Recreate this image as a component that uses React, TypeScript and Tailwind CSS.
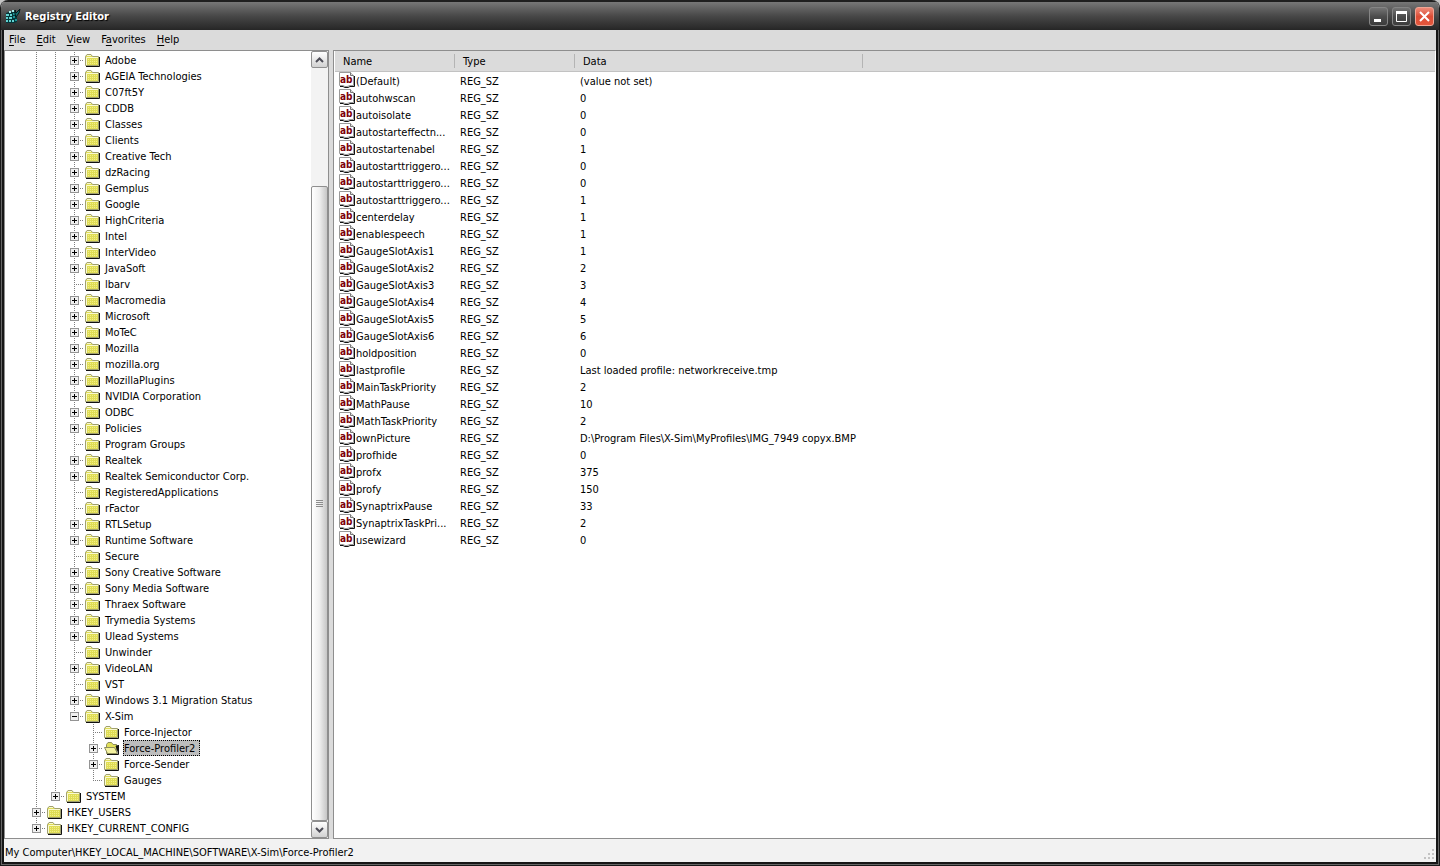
import { useState } from "react";

type Kind = "line" | "blank" | "plus" | "minus" | "leaf" | "lastplus" | "lastleaf" | "lastminus";

interface Node {
  name: string;
  cells: Kind[];
  open?: boolean;
}

const leafNames = new Set([
  "lbarv", "Program Groups", "RegisteredApplications", "rFactor", "Secure", "Unwinder", "VST",
]);

const software = [
  "Adobe", "AGEIA Technologies", "C07ft5Y", "CDDB", "Classes", "Clients", "Creative Tech", "dzRacing",
  "Gemplus", "Google", "HighCriteria", "Intel", "InterVideo", "JavaSoft", "lbarv", "Macromedia",
  "Microsoft", "MoTeC", "Mozilla", "mozilla.org", "MozillaPlugins", "NVIDIA Corporation", "ODBC",
  "Policies", "Program Groups", "Realtek", "Realtek Semiconductor Corp.", "RegisteredApplications",
  "rFactor", "RTLSetup", "Runtime Software", "Secure", "Sony Creative Software", "Sony Media Software",
  "Thraex Software", "Trymedia Systems", "Ulead Systems", "Unwinder", "VideoLAN", "VST",
  "Windows 3.1 Migration Status",
];

const nodes: Node[] = [
  ...software.map((name): Node => ({ name, cells: ["line", "line", leafNames.has(name) ? "leaf" : "plus"] })),
  { name: "X-Sim", cells: ["line", "line", "lastminus"] },
  { name: "Force-Injector", cells: ["line", "line", "blank", "leaf"] },
  { name: "Force-Profiler2", cells: ["line", "line", "blank", "plus"], open: true },
  { name: "Force-Sender", cells: ["line", "line", "blank", "plus"] },
  { name: "Gauges", cells: ["line", "line", "blank", "lastleaf"] },
  { name: "SYSTEM", cells: ["line", "lastplus"] },
  { name: "HKEY_USERS", cells: ["plus"] },
  { name: "HKEY_CURRENT_CONFIG", cells: ["lastplus"] },
];

const values: [string, string][] = [
  ["(Default)", "(value not set)"],
  ["autohwscan", "0"],
  ["autoisolate", "0"],
  ["autostarteffectn...", "0"],
  ["autostartenabel", "1"],
  ["autostarttriggero...", "0"],
  ["autostarttriggero...", "0"],
  ["autostarttriggero...", "1"],
  ["centerdelay", "1"],
  ["enablespeech", "1"],
  ["GaugeSlotAxis1", "1"],
  ["GaugeSlotAxis2", "2"],
  ["GaugeSlotAxis3", "3"],
  ["GaugeSlotAxis4", "4"],
  ["GaugeSlotAxis5", "5"],
  ["GaugeSlotAxis6", "6"],
  ["holdposition", "0"],
  ["lastprofile", "Last loaded profile: networkreceive.tmp"],
  ["MainTaskPriority", "2"],
  ["MathPause", "10"],
  ["MathTaskPriority", "2"],
  ["ownPicture", "D:\\Program Files\\X-Sim\\MyProfiles\\IMG_7949 copyx.BMP"],
  ["profhide", "0"],
  ["profx", "375"],
  ["profy", "150"],
  ["SynaptrixPause", "33"],
  ["SynaptrixTaskPri...", "2"],
  ["usewizard", "0"],
];

const menus = [
  ["", "F", "ile"],
  ["", "E", "dit"],
  ["", "V", "iew"],
  ["F", "a", "vorites"],
  ["", "H", "elp"],
];

function Branch({ kind }: { kind: Kind }) {
  const last = kind.startsWith("last");
  const box = kind.endsWith("plus") || kind.endsWith("minus");
  const joined = kind !== "line" && kind !== "blank";
  return (
    <svg width="19" height="16" className="block shrink-0" shapeRendering="crispEdges" aria-hidden="true">
      {kind !== "blank" && (
        <path d={last ? "M9.5 0V9" : "M9.5 0V16"} stroke="#7d7d7d" strokeDasharray="1 1" />
      )}
      {joined && <path d="M9 8.5H19" stroke="#7d7d7d" strokeDasharray="1 1" />}
      {box && (
        <>
          <rect x="5.5" y="4.5" width="8" height="8" fill="#f0f0f0" stroke="#949494" />
          <path d="M7 8.5H12" stroke="#000" />
          {kind.endsWith("plus") && <path d="M9.5 6V11" stroke="#000" />}
        </>
      )}
    </svg>
  );
}

function Folder({ open }: { open?: boolean }) {
  return (
    <svg width="17" height="16" className="block shrink-0" aria-hidden="true">
      {open ? (
        <>
          <path d="M4 14.5H15.5V5" fill="none" stroke="#111" />
          <path d="M3.5 7.5V4.5L5 2.5H8.5L10 4.5H13.5V13.5H3.5Z" fill="#e2e05a" stroke="#8e8e5c" />
          <path d="M1.5 7.5H11.5L14.5 13.5H4.5Z" fill="#f4f2a0" stroke="#8e8e5c" />
          <path d="M12.5 6L15 13V5Z" fill="#111" />
        </>
      ) : (
        <>
          <path d="M2 14.5H15.5V5" fill="none" stroke="#111" />
          <path d="M1.5 13.5V4.5L3 2.5H7L8.5 4.5H14.5V13.5Z" fill="#dfdc55" stroke="#a0a070" />
          <path d="M3 3.5H7M2.5 13V5.5H14" fill="none" stroke="#fafad2" />
          <path d="M4 7.5H13M4 9.5H13M4 11.5H13" stroke="#f2f088" strokeDasharray="1 1" />
        </>
      )}
    </svg>
  );
}

function StringIcon() {
  return (
    <svg width="17" height="17" className="block shrink-0" aria-hidden="true">
      <path d="M1 14.5H4L6 15.5H9L11 14.5H15.5V4" fill="none" stroke="#111" />
      <path d="M0.5 0.5H11.5L14.5 3.5V13.5H11L8 14.5H6L4 13.5H0.5Z" fill="#fff" stroke="#9a9a9a" />
      <path d="M11.5 0.5V3.5H14.5" fill="#ddd" stroke="#777" />
      <text x="1" y="11" fontSize="10" fontWeight="700" fontFamily="DejaVu Sans Condensed, sans-serif" fill="#7d0008">
        ab
      </text>
    </svg>
  );
}

function AppIcon() {
  return (
    <svg width="16" height="16" className="block shrink-0" aria-hidden="true">
      <path d="M1 5L4 4H10L12 8V14L9 15H1Z" fill="#04383b" />
      <path d="M1 6H4V8H1ZM5 6H7V8H5ZM1 9H3V11H1ZM4 9H7V11H4ZM1 12H3V14H1ZM4 12H6V14H4ZM7 12H9V14H7Z" fill="#62d2d0" />
      <path d="M8 8H10V10H8ZM10 11H12V13H10ZM8 5H10V7H8Z" fill="#1c9496" />
      <path d="M4 3H6V5H4ZM7 2H9V4H7Z" fill="#a6efec" />
      <path d="M10 2L11 5L15 1L14 5L11 9L10 6Z" fill="#146e70" stroke="#02191a" />
    </svg>
  );
}

function ScrollButton({ down }: { down?: boolean }) {
  return (
    <button
      type="button"
      aria-label={down ? "Scroll down" : "Scroll up"}
      className="flex h-[17px] w-full shrink-0 items-center justify-center rounded-xs border border-[#8f8f8f] bg-linear-to-b from-white to-[#d2d2d2]"
    >
      <svg width="9" height="6" aria-hidden="true">
        <path d={down ? "M1 1L4.5 4.5L8 1" : "M1 5L4.5 1.5L8 5"} fill="none" stroke="#4c4c56" strokeWidth="2" />
      </svg>
    </button>
  );
}

const captionButton =
  "flex size-[19px] items-center justify-center rounded-[3px] border border-[#858585] bg-linear-to-b from-[#747474] via-[#4c4c4c] to-[#3c3c3c]";

export default function App() {
  const [selected, setSelected] = useState("Force-Profiler2");
  return (
    <div className="min-h-screen bg-[#c4c4c4]">
      <div className="flex min-h-screen flex-col overflow-hidden rounded-t-lg border-x border-b border-[#1a1a1a] bg-[#dbdbdb] font-['DejaVu_Sans_Condensed','DejaVu_Sans',sans-serif] text-[11px] leading-4 text-black">
        <header className="flex h-[30px] shrink-0 items-center gap-1 border-t-2 border-[#1f1f1f] bg-linear-to-b from-[#777] via-[#484848] to-[#262626] pr-[5px] pl-1">
          <AppIcon />
          <h1 className="flex-1 pt-px font-bold text-white [text-shadow:1px_1px_1px_#000]">Registry Editor</h1>
          <div className="flex gap-1">
            <button type="button" aria-label="Minimize" className={captionButton}>
              <svg width="15" height="15" aria-hidden="true">
                <path d="M3 10H10V13H3Z" fill="#fff" />
              </svg>
            </button>
            <button type="button" aria-label="Maximize" className={captionButton}>
              <svg width="15" height="15" aria-hidden="true">
                <path d="M2.5 3V12.5H12.5V3" fill="none" stroke="#fff" />
                <path d="M2 2H13V5H2Z" fill="#fff" />
              </svg>
            </button>
            <button
              type="button"
              aria-label="Close"
              className="flex size-[19px] items-center justify-center rounded-[3px] border border-[#f0a695] bg-linear-to-b from-[#ee8a78] via-[#dc4d36] to-[#e5573c]"
            >
              <svg width="15" height="15" aria-hidden="true">
                <path d="M3 3L12 12M12 3L3 12" stroke="#fff" strokeWidth="2" />
              </svg>
            </button>
          </div>
        </header>

        <div className="flex flex-1 flex-col border-x border-b border-[#666]">
          <div className="flex flex-1 flex-col border-x-2 border-b-2 border-[#161616]">
            <nav className="flex h-5 shrink-0 items-center gap-[11px] pl-[5px]">
              {menus.map(([before, key, after]) => (
                <button key={after} type="button">
                  {before}
                  <span className="underline underline-offset-2">{key}</span>
                  {after}
                </button>
              ))}
            </nav>

            <main className="flex flex-1 gap-1">
              <section className="flex w-[325px] shrink-0 border border-[#8e8e8e] bg-white" aria-label="Keys">
                <ul className="min-w-0 flex-1 overflow-hidden pt-px pl-[22px]">
                  {nodes.map((node) => (
                    <li key={node.name} className="flex h-4 items-center">
                      {node.cells.map((kind, i) => (
                        <Branch key={i} kind={kind} />
                      ))}
                      <Folder open={node.open} />
                      <button
                        type="button"
                        onClick={() => setSelected(node.name)}
                        className={
                          node.name === selected
                            ? "ml-[3px] h-4 border border-dotted border-black bg-[#bdbdbd] pr-1 leading-4 whitespace-nowrap"
                            : "ml-1 h-4 pr-1 leading-[18px] whitespace-nowrap"
                        }
                      >
                        {node.name}
                      </button>
                    </li>
                  ))}
                </ul>
                <div className="flex w-[17px] shrink-0 flex-col bg-[#f3f3f3]">
                  <ScrollButton />
                  <div className="flex flex-1 flex-col">
                    <div className="basis-[118px]" />
                    <div className="flex flex-1 flex-col items-center justify-center gap-px rounded-xs border border-[#8f8f8f] bg-linear-to-r from-white via-[#efefef] to-[#c6c6c6]">
                      <span className="h-px w-[7px] bg-[#8c8c8c]" />
                      <span className="h-px w-[7px] bg-[#8c8c8c]" />
                      <span className="h-px w-[7px] bg-[#8c8c8c]" />
                      <span className="h-px w-[7px] bg-[#8c8c8c]" />
                    </div>
                  </div>
                  <ScrollButton down />
                </div>
              </section>

              <section className="min-w-0 flex-1 border border-[#8e8e8e] border-r-white bg-white pl-px" aria-label="Values">
                <table className="w-full table-fixed border-separate border-spacing-0 text-left">
                  <colgroup>
                    <col className="w-[120px]" />
                    <col className="w-[120px]" />
                    <col className="w-[288px]" />
                    <col />
                  </colgroup>
                  <thead>
                    <tr className="h-[21px] bg-[#dbdbdb]">
                      {["Name", "Type", "Data"].map((h) => (
                        <th key={h} scope="col" className="border-b border-[#c2c2c2] p-0 font-normal">
                          <div className="h-[14px] border-r border-[#b4b4b4] pl-2 leading-4">{h}</div>
                        </th>
                      ))}
                      <td className="border-b border-[#c2c2c2] p-0" />
                    </tr>
                  </thead>
                  <tbody>
                    {values.map(([name, data], i) => (
                      <tr key={i} className="h-[17px] leading-[17px]">
                        <td className="p-0">
                          <div className="flex h-[17px] pl-1 whitespace-nowrap">
                            <StringIcon />
                            <span className="pt-px">{name}</span>
                          </div>
                        </td>
                        <td className="p-0 pl-[5px]">
                          <div className="h-[17px] pt-px">REG_SZ</div>
                        </td>
                        <td className="p-0 pl-[5px] whitespace-nowrap">
                          <div className="h-[17px] pt-px">{data}</div>
                        </td>
                        <td className="p-0" />
                      </tr>
                    ))}
                  </tbody>
                </table>
              </section>
            </main>

            <footer className="flex h-[23px] shrink-0 items-center justify-between bg-[#f2f2f2] pl-px">
              <span className="pt-1">My Computer\HKEY_LOCAL_MACHINE\SOFTWARE\X-Sim\Force-Profiler2</span>
              <svg width="12" height="12" className="mt-2" fill="#c3c3c3" aria-hidden="true">
                <path d="M8 0H10V2H8ZM8 4H10V6H8ZM4 4H6V6H4ZM8 8H10V10H8ZM4 8H6V10H4ZM0 8H2V10H0Z" />
              </svg>
            </footer>
          </div>
        </div>
      </div>
    </div>
  );
}
